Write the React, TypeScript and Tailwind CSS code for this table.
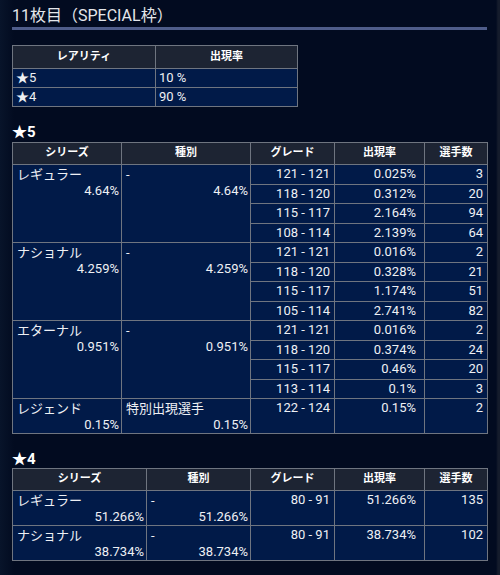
import React from 'react';

const font = { fontFamily: 'Roboto, "Noto Sans CJK JP", sans-serif' };

const th = 'border border-[#6f7580] bg-[#1d2433] text-[11px] font-bold text-white text-center p-0';
const td = 'border border-[#6f7580] bg-[#011a48] text-[13px] text-[#eef0f4] p-0 align-top';

type Row = { grade: string; rate: string; count: string };
type Group = { series: string; kind: string; pct: string; rows: Row[] };

const star5: Group[] = [
  {
    series: 'レギュラー', kind: '-', pct: '4.64%',
    rows: [
      { grade: '121 - 121', rate: '0.025%', count: '3' },
      { grade: '118 - 120', rate: '0.312%', count: '20' },
      { grade: '115 - 117', rate: '2.164%', count: '94' },
      { grade: '108 - 114', rate: '2.139%', count: '64' },
    ],
  },
  {
    series: 'ナショナル', kind: '-', pct: '4.259%',
    rows: [
      { grade: '121 - 121', rate: '0.016%', count: '2' },
      { grade: '118 - 120', rate: '0.328%', count: '21' },
      { grade: '115 - 117', rate: '1.174%', count: '51' },
      { grade: '105 - 114', rate: '2.741%', count: '82' },
    ],
  },
  {
    series: 'エターナル', kind: '-', pct: '0.951%',
    rows: [
      { grade: '121 - 121', rate: '0.016%', count: '2' },
      { grade: '118 - 120', rate: '0.374%', count: '24' },
      { grade: '115 - 117', rate: '0.46%', count: '20' },
      { grade: '113 - 114', rate: '0.1%', count: '3' },
    ],
  },
  {
    series: 'レジェンド', kind: '特別出現選手', pct: '0.15%',
    rows: [{ grade: '122 - 124', rate: '0.15%', count: '2' }],
  },
];

const star4: Group[] = [
  { series: 'レギュラー', kind: '-', pct: '51.266%', rows: [{ grade: '80 - 91', rate: '51.266%', count: '135' }] },
  { series: 'ナショナル', kind: '-', pct: '38.734%', rows: [{ grade: '80 - 91', rate: '38.734%', count: '102' }] },
];

const NameCell: React.FC<{ name: string; pct: string; span: number }> = ({ name, pct, span }) => (
  <td rowSpan={span} className={td}>
    <div className="pl-[4px] leading-[17px] pt-[1px]">{name}</div>
    <div className="pr-[2px] text-right leading-[16px]">{pct}</div>
  </td>
);

const RateTable: React.FC<{ groups: Group[]; c1: string; c2: string; single?: boolean }> = ({ groups, c1, c2 }) => (
  <table className="table-fixed border-collapse w-[475px]">
    <colgroup>
      <col className={c1} />
      <col className={c2} />
      <col className="w-[84px]" />
      <col className="w-[90px]" />
      <col className="w-[63px]" />
    </colgroup>
    <thead>
      <tr className="h-[22px]">
        <th className={th}>シリーズ</th>
        <th className={th}>種別</th>
        <th className={th}>グレード</th>
        <th className={th}>出現率</th>
        <th className={th}>選手数</th>
      </tr>
    </thead>
    <tbody>
      {groups.map((g) =>
        g.rows.map((r, i) => (
          <tr key={g.series + i} className={g.rows.length === 1 ? 'h-[34px]' : 'h-[19.5px]'}>
            {i === 0 && <NameCell name={g.series} pct={g.pct} span={g.rows.length} />}
            {i === 0 && <NameCell name={g.kind} pct={g.pct} span={g.rows.length} />}
            <td className={`${td} text-right pr-[4px] leading-[18px]`}>{r.grade}</td>
            <td className={`${td} text-right pr-[8px] leading-[18px]`}>{r.rate}</td>
            <td className={`${td} text-right pr-[4px] leading-[18px]`}>{r.count}</td>
          </tr>
        ))
      )}
    </tbody>
  </table>
);

export default function App() {
  return (
    <div
      className="w-[500px] h-[575px] overflow-hidden bg-[linear-gradient(90deg,#08142a_0px,#020b20_14px,#020b20_496px,#151c2c_498px)] text-[#eef0f4]"
      style={font}
    >
      <div className="pl-[12px] w-[487px]">
        <div className="pt-[6px] h-[27px] text-[16px] leading-[20px] text-[#e4e6ea]">11枚目（SPECIAL枠）</div>
        <div className="h-[3px] bg-[#4f5d8a]" />

        <table className="table-fixed border-collapse w-[285px] mt-[15px]">
          <colgroup>
            <col className="w-[143px]" />
            <col className="w-[142px]" />
          </colgroup>
          <thead>
            <tr className="h-[23px]">
              <th className={th}>レアリティ</th>
              <th className={th}>出現率</th>
            </tr>
          </thead>
          <tbody>
            <tr className="h-[19px]">
              <td className={`${td} pl-[3px] leading-[18px]`}>★5</td>
              <td className={`${td} pl-[3px] leading-[18px]`}>10 %</td>
            </tr>
            <tr className="h-[19px]">
              <td className={`${td} pl-[3px] leading-[18px]`}>★4</td>
              <td className={`${td} pl-[3px] leading-[18px]`}>90 %</td>
            </tr>
          </tbody>
        </table>

        <div className="mt-[15px] h-[20px] text-[15px] font-bold leading-[20px] text-white">★5</div>
        <RateTable groups={star5} c1="w-[109px]" c2="w-[129px]" />

        <div className="mt-[16px] h-[18px] text-[15px] font-bold leading-[18px] text-white">★4</div>
        <RateTable groups={star4} c1="w-[134px]" c2="w-[104px]" />
      </div>
    </div>
  );
}
